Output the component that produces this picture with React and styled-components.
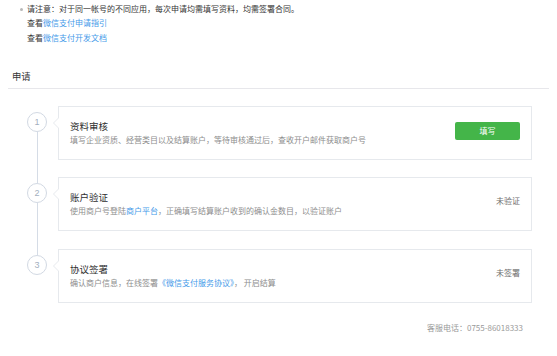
import React from "react";
import styled, { createGlobalStyle } from "styled-components";

const GlobalStyle = createGlobalStyle`
  html, body { margin: 0; padding: 0; background: #fff; }
  body {
    font-family: "Noto Sans CJK SC", "Noto Sans", "Liberation Sans", sans-serif;
    color: #353535;
  }
  * { box-sizing: border-box; }
`;

const Page = styled.div`
  width: 557px;
  height: 356px;
  overflow: hidden;
`;

const Notice = styled.ul`
  margin: 0;
  padding: 1.5px 0 0 27px;
  list-style: none;
  font-size: 8px;
  line-height: 14.5px;
  color: #353535;
`;

const NoticeItem = styled.li`
  position: relative;
  white-space: nowrap;
  ${(p) =>
    p.$bullet &&
    `
    &::before {
      content: "";
      position: absolute;
      left: -7px;
      top: 6px;
      width: 3px;
      height: 3px;
      border-radius: 50%;
      background: #b8b8b8;
    }
  `}
`;

const Link = styled.a`
  color: #459ae9;
  text-decoration: none;
`;

const SectionHeader = styled.div`
  margin: 23.7px 8px 0 8px;
  padding: 0 0 5.3px 4px;
  border-bottom: 1px solid #e7e7eb;
  font-size: 9.33px;
  line-height: 14px;
  color: #353535;
`;

const Steps = styled.div`
  margin-top: 17px;
  display: flex;
  flex-direction: column;
  gap: 17.5px;
`;

const StepRow = styled.div`
  display: flex;
  height: 54px;
`;

const Rail = styled.div`
  position: relative;
  width: 58px;
  flex: none;
  ${(p) =>
    !p.$last &&
    `
    &::after {
      content: "";
      position: absolute;
      left: 36.5px;
      top: 26px;
      width: 1px;
      height: 51.5px;
      background: #d5dce6;
    }
  `}
`;

const Circle = styled.div`
  margin: 6px 0 0 27px;
  width: 20px;
  height: 20px;
  border-radius: 50%;
  border: 1.2px solid #d2d9e3;
  color: #a3afc0;
  font-family: "Liberation Sans", "Noto Sans", sans-serif;
  font-size: 9px;
  display: flex;
  align-items: center;
  justify-content: center;
  background: #fff;
`;

const Card = styled.div`
  position: relative;
  flex: 1;
  margin-right: 25px;
  height: 54px;
  border: 1px solid #e6e9ed;
  background: #fff;
  display: flex;
  padding: 0 11px 0 11px;

  &::before,
  &::after {
    content: "";
    position: absolute;
    top: 10px;
    width: 0;
    height: 0;
    border-style: solid;
    border-color: transparent;
  }
  &::before {
    left: -6px;
    border-width: 6px 6px 6px 0;
    border-right-color: #e6e9ed;
  }
  &::after {
    left: -5px;
    border-width: 6px 6px 6px 0;
    border-right-color: #fff;
  }
`;

const CardBody = styled.div`
  flex: 1;
  display: flex;
  flex-direction: column;
  justify-content: center;
  min-width: 0;
`;

const CardTitle = styled.div`
  font-size: 9.5px;
  line-height: 14px;
  color: #2f2f2f;
`;

const CardDesc = styled.div`
  font-size: 8px;
  line-height: 14px;
  color: #8d8d8d;
  white-space: nowrap;
`;

const Status = styled.div`
  align-self: flex-start;
  margin-top: 16px;
  font-size: 8px;
  line-height: 14px;
  color: #6e6e6e;
`;

const FillButton = styled.button`
  align-self: flex-start;
  margin-top: 15px;
  width: 65px;
  height: 18px;
  padding: 0;
  border: none;
  border-radius: 2px;
  background: #44b549;
  color: #fff;
  font-family: inherit;
  font-size: 8px;
  line-height: 18px;
  cursor: pointer;
`;

const Footer = styled.div`
  margin-top: 17.7px;
  padding-right: 34px;
  text-align: right;
  font-size: 8px;
  line-height: 14px;
  color: #9a9a9a;
`;

const steps = [
  {
    n: 1,
    title: "资料审核",
    desc: <>填写企业资质、经营类目以及结算账户，等待审核通过后，查收开户邮件获取商户号</>,
    action: <FillButton>填写</FillButton>,
  },
  {
    n: 2,
    title: "账户验证",
    desc: (
      <>
        使用商户号登陆<Link href="#">商户平台</Link>，正确填写结算账户收到的确认金数目，以验证账户
      </>
    ),
    action: <Status>未验证</Status>,
  },
  {
    n: 3,
    title: "协议签署",
    desc: (
      <>
        确认商户信息，在线签署<Link href="#">《微信支付服务协议》</Link>， 开启结算
      </>
    ),
    action: <Status>未签署</Status>,
  },
];

export default function App() {
  return (
    <>
      <GlobalStyle />
      <Page>
        <Notice>
          <NoticeItem $bullet>请注意：对于同一帐号的不同应用，每次申请均需填写资料，均需签署合同。</NoticeItem>
          <NoticeItem>
            查看<Link href="#">微信支付申请指引</Link>
          </NoticeItem>
          <NoticeItem>
            查看<Link href="#">微信支付开发文档</Link>
          </NoticeItem>
        </Notice>
        <SectionHeader>申请</SectionHeader>
        <Steps>
          {steps.map((s, i) => (
            <StepRow key={s.n}>
              <Rail $last={i === steps.length - 1}>
                <Circle>{s.n}</Circle>
              </Rail>
              <Card>
                <CardBody>
                  <CardTitle>{s.title}</CardTitle>
                  <CardDesc>{s.desc}</CardDesc>
                </CardBody>
                {s.action}
              </Card>
            </StepRow>
          ))}
        </Steps>
        <Footer>客服电话：0755-86018333</Footer>
      </Page>
    </>
  );
}
